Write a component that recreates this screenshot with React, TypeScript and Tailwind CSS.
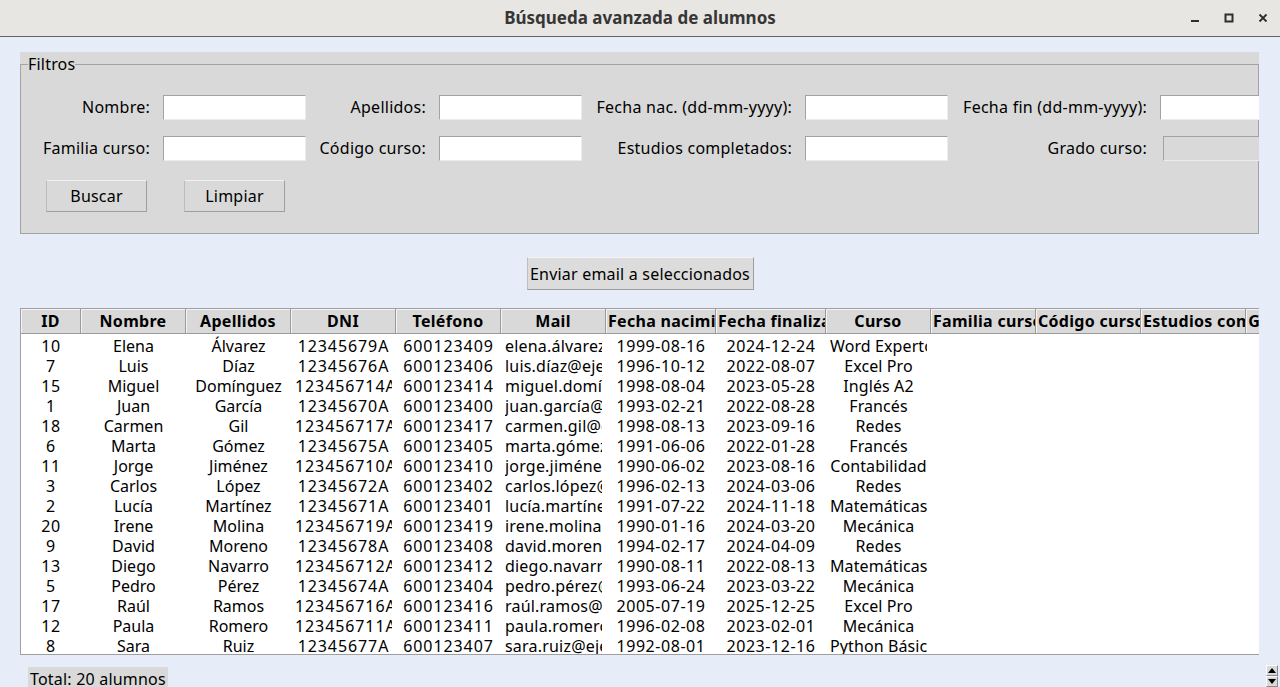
import React from 'react'

// Tk-style "Búsqueda avanzada de alumnos" window

type Alumno = {
  id: number
  nombre: string
  apellidos: string
  dni: string
  telefono: string
  mail: string
  nacimiento: string
  fin: string
  curso: string
}

const alumnos: Alumno[] = [
  { id: 10, nombre: 'Elena', apellidos: 'Álvarez', dni: '12345679A', telefono: '600123409', mail: 'elena.álvarez@ejemplo.com', nacimiento: '1999-08-16', fin: '2024-12-24', curso: 'Word Experto' },
  { id: 7, nombre: 'Luis', apellidos: 'Díaz', dni: '12345676A', telefono: '600123406', mail: 'luis.díaz@ejemplo.com', nacimiento: '1996-10-12', fin: '2022-08-07', curso: 'Excel Pro' },
  { id: 15, nombre: 'Miguel', apellidos: 'Domínguez', dni: '123456714A', telefono: '600123414', mail: 'miguel.domínguez@ejemplo.com', nacimiento: '1998-08-04', fin: '2023-05-28', curso: 'Inglés A2' },
  { id: 1, nombre: 'Juan', apellidos: 'García', dni: '12345670A', telefono: '600123400', mail: 'juan.garcía@ejemplo.com', nacimiento: '1993-02-21', fin: '2022-08-28', curso: 'Francés' },
  { id: 18, nombre: 'Carmen', apellidos: 'Gil', dni: '123456717A', telefono: '600123417', mail: 'carmen.gil@ejemplo.com', nacimiento: '1998-08-13', fin: '2023-09-16', curso: 'Redes' },
  { id: 6, nombre: 'Marta', apellidos: 'Gómez', dni: '12345675A', telefono: '600123405', mail: 'marta.gómez@ejemplo.com', nacimiento: '1991-06-06', fin: '2022-01-28', curso: 'Francés' },
  { id: 11, nombre: 'Jorge', apellidos: 'Jiménez', dni: '123456710A', telefono: '600123410', mail: 'jorge.jiménez@ejemplo.com', nacimiento: '1990-06-02', fin: '2023-08-16', curso: 'Contabilidad' },
  { id: 3, nombre: 'Carlos', apellidos: 'López', dni: '12345672A', telefono: '600123402', mail: 'carlos.lópez@ejemplo.com', nacimiento: '1996-02-13', fin: '2024-03-06', curso: 'Redes' },
  { id: 2, nombre: 'Lucía', apellidos: 'Martínez', dni: '12345671A', telefono: '600123401', mail: 'lucía.martínez@ejemplo.com', nacimiento: '1991-07-22', fin: '2024-11-18', curso: 'Matemáticas' },
  { id: 20, nombre: 'Irene', apellidos: 'Molina', dni: '123456719A', telefono: '600123419', mail: 'irene.molina@ejemplo.com', nacimiento: '1990-01-16', fin: '2024-03-20', curso: 'Mecánica' },
  { id: 9, nombre: 'David', apellidos: 'Moreno', dni: '12345678A', telefono: '600123408', mail: 'david.moreno@ejemplo.com', nacimiento: '1994-02-17', fin: '2024-04-09', curso: 'Redes' },
  { id: 13, nombre: 'Diego', apellidos: 'Navarro', dni: '123456712A', telefono: '600123412', mail: 'diego.navarro@ejemplo.com', nacimiento: '1990-08-11', fin: '2022-08-13', curso: 'Matemáticas' },
  { id: 5, nombre: 'Pedro', apellidos: 'Pérez', dni: '12345674A', telefono: '600123404', mail: 'pedro.pérez@ejemplo.com', nacimiento: '1993-06-24', fin: '2023-03-22', curso: 'Mecánica' },
  { id: 17, nombre: 'Raúl', apellidos: 'Ramos', dni: '123456716A', telefono: '600123416', mail: 'raúl.ramos@ejemplo.com', nacimiento: '2005-07-19', fin: '2025-12-25', curso: 'Excel Pro' },
  { id: 12, nombre: 'Paula', apellidos: 'Romero', dni: '123456711A', telefono: '600123411', mail: 'paula.romero@ejemplo.com', nacimiento: '1996-02-08', fin: '2023-02-01', curso: 'Mecánica' },
  { id: 8, nombre: 'Sara', apellidos: 'Ruiz', dni: '12345677A', telefono: '600123407', mail: 'sara.ruiz@ejemplo.com', nacimiento: '1992-08-01', fin: '2023-12-16', curso: 'Python Básico' },
]

// tk rounds glyph advances, so digits come out a bit wider than in the browser
const columns = [
  { title: 'ID', w: 'w-[60px]', cell: 'tracking-[0.6px]' },
  { title: 'Nombre', w: 'w-[105px]', cell: '' },
  { title: 'Apellidos', w: 'w-[105px]', cell: '' },
  { title: 'DNI', w: 'w-[105px]', cell: 'tracking-[0.9px]' },
  { title: 'Teléfono', w: 'w-[105px]', cell: 'tracking-[0.9px]' },
  { title: 'Mail', w: 'w-[105px]', cell: 'tracking-[0.2px]' },
  { title: 'Fecha nacimiento', w: 'w-[110px]', cell: 'tracking-[0.55px]' },
  { title: 'Fecha finalización', w: 'w-[110px]', cell: 'tracking-[0.55px]' },
  { title: 'Curso', w: 'w-[105px]', cell: 'tracking-[0.1px]' },
  { title: 'Familia curso', w: 'w-[105px]', cell: '' },
  { title: 'Código curso', w: 'w-[105px]', cell: '' },
  { title: 'Estudios completados', w: 'w-[105px]', cell: '' },
  { title: 'Grado curso', w: 'w-[105px]', cell: '' },
]

function Entry({ disabled = false }: { disabled?: boolean }) {
  return (
    <div
      className={
        'h-[25px] w-[143px] shrink-0 border border-[#a2a2a2] border-r-[#ececec] border-b-[#ececec] ' +
        (disabled ? 'ml-[3px] bg-[#d9d9d9]' : 'bg-white')
      }
    />
  )
}

function Label({ text, w }: { text: string; w: string }) {
  return (
    <div className={`${w} shrink-0 h-[25px] pr-[13px] text-right leading-[25px] whitespace-nowrap tracking-[0.25px]`}>
      {text}
    </div>
  )
}

function TkButton({ children, className = '' }: { children: React.ReactNode; className?: string }) {
  return (
    <button
      className={
        'h-[32px] bg-[#d9d9d9] border border-[#9f9f9f] border-t-[#f2f2f2] border-l-[#bdbdbd] text-[16px] leading-none text-black tracking-[0.2px] ' +
        className
      }
    >
      {children}
    </button>
  )
}

function WindowControls() {
  return (
    <div className="flex items-center gap-[24px] pr-[12px] text-[#2e2e2e]">
      <svg width="10" height="10" viewBox="0 0 10 10">
        <rect x="1" y="7" width="8" height="2" fill="currentColor" />
      </svg>
      <svg width="10" height="10" viewBox="0 0 10 10">
        <rect x="1.5" y="1.5" width="7" height="7" fill="none" stroke="currentColor" strokeWidth="2" />
      </svg>
      <svg width="10" height="10" viewBox="0 0 10 10">
        <path d="M1.5 1.5 L8.5 8.5 M8.5 1.5 L1.5 8.5" stroke="currentColor" strokeWidth="1.8" />
      </svg>
    </div>
  )
}

export default function App() {
  return (
    <div className="w-[1280px] h-[687px] overflow-hidden bg-[#e7edf8] font-['Noto_Sans',sans-serif] text-[16px] text-black flex flex-col">
      {/* Title bar */}
      <div className="h-[37px] shrink-0 bg-[#e8e6e3] border-b border-[#6c625c] flex items-center">
        <div className="w-[130px]" />
        <div className="flex-1 text-center text-[17px] font-bold text-[#363636]">Búsqueda avanzada de alumnos</div>
        <div className="w-[130px] flex justify-end">
          <WindowControls />
        </div>
      </div>

      <div className="pl-[20px] pr-[21px] flex flex-col">
        {/* Filtros */}
        <div className="mt-[15px] bg-[#d9d9d9] overflow-hidden">
          <fieldset className="h-[182px] min-w-0 border border-[#a3a3a3] px-0">
            <legend className="ml-[7px] leading-[24px] text-[16px] tracking-[0.2px]">Filtros</legend>
            <div className="pt-[19px] flex flex-col gap-[16px]">
              <div className="flex">
                <Label text="Nombre:" w="w-[142px]" />
                <Entry />
                <Label text="Apellidos:" w="w-[133px]" />
                <Entry />
                <Label text="Fecha nac. (dd-mm-yyyy):" w="w-[223px]" />
                <Entry />
                <Label text="Fecha fin (dd-mm-yyyy):" w="w-[212px]" />
                <Entry />
              </div>
              <div className="flex">
                <Label text="Familia curso:" w="w-[142px]" />
                <Entry />
                <Label text="Código curso:" w="w-[133px]" />
                <Entry />
                <Label text="Estudios completados:" w="w-[223px]" />
                <Entry />
                <Label text="Grado curso:" w="w-[212px]" />
                <Entry disabled />
              </div>
              <div className="flex gap-[37px] pl-[25px] pt-[3px]">
                <TkButton className="w-[101px]">Buscar</TkButton>
                <TkButton className="w-[101px]">Limpiar</TkButton>
              </div>
            </div>
          </fieldset>
        </div>

        {/* Email button */}
        <div className="mt-[23px] flex justify-center pl-[1px]">
          <TkButton className="h-[33px] w-[227px] bg-[#dcdcdc]">Enviar email a seleccionados</TkButton>
        </div>

        {/* Results table */}
        <div className="mt-[18px] h-[347px] bg-white border border-[#a0a0a0] border-r-0 overflow-hidden">
          <div className="flex h-[25px] w-max">
            {columns.map((c) => (
              <div
                key={c.title}
                className={`${c.w} shrink-0 h-[25px] bg-[#d9d9d9] border-r border-b border-[#9a9a9a] shadow-[inset_1px_1px_0_#f4f4f4] px-[2px] text-center font-bold leading-[24px] tracking-[0.3px] overflow-hidden whitespace-nowrap`}
              >
                {c.title}
              </div>
            ))}
          </div>
          <div className="pt-[2px]">
            {alumnos.map((a) => {
              const cells = [String(a.id), a.nombre, a.apellidos, a.dni, a.telefono, a.mail, a.nacimiento, a.fin, a.curso, '', '', '', '']
              return (
                <div key={a.id} className="flex h-[20px] w-max">
                  {cells.map((v, i) => (
                    <div key={i} className={`${columns[i].w} shrink-0 px-[4px]`}>
                      <div
                        className={`${columns[i].cell} text-center leading-[20px] overflow-hidden whitespace-nowrap`}
                      >
                        {v}
                      </div>
                    </div>
                  ))}
                </div>
              )
            })}
          </div>
        </div>
      </div>

      {/* Footer */}
      <div className="mt-[12px] flex justify-between items-start pl-[28px] pr-[2px]">
        <div className="bg-[#d9d9d9] px-[2px] h-[24px] leading-[24px] whitespace-nowrap tracking-[0.2px]">Total: 20 alumnos</div>
        <div className="-mt-[2px] flex flex-col">
          <div className="w-[12px] h-[11px] bg-[#d9d9d9] border border-[#8a8a8a] border-t-white border-l-white flex items-center justify-center">
            <svg width="8" height="5" viewBox="0 0 8 5">
              <path d="M4 0 L8 5 L0 5 Z" fill="#000" />
            </svg>
          </div>
          <div className="w-[12px] h-[11px] bg-[#d9d9d9] border border-[#8a8a8a] border-t-white border-l-white flex items-center justify-center">
            <svg width="8" height="5" viewBox="0 0 8 5">
              <path d="M0 0 L8 0 L4 5 Z" fill="#000" />
            </svg>
          </div>
        </div>
      </div>
    </div>
  )
}
